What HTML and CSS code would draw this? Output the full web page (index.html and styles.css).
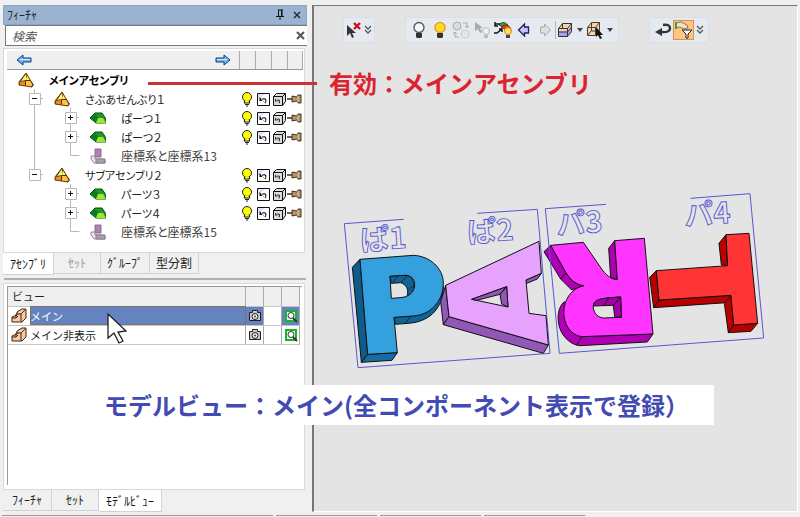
FILE: index.html
```html
<!DOCTYPE html>
<html lang="ja">
<head>
<meta charset="utf-8">
<title>モデルビュー</title>
<link rel="stylesheet" href="styles.css">
</head>
<body>
<svg class="defs" aria-hidden="true">
  <symbol id="assembly" viewBox="0 0 16 16"><path d="M8 1 1 10v3l13 2 2-2z" fill="#553300"/><path d="M8 2v6l-5 1z" fill="#f7f39a"/><path d="M9 2l4 6H8z" fill="#fff36a"/><path d="M1 10l6-1v5l-5-1z" fill="#f08a1c"/><path d="M8 9h5l2 5H8z" fill="#ffc04a"/><path d="M8 1 1 10v3l13 2 1-2z" fill="none" stroke="#6b4300"/></symbol>
  <symbol id="part" viewBox="0 0 16 16"><path d="M0 8l5-5h7l4 6v4H6z" fill="#1f9a28" stroke="#064d0c"/><path d="M6 13l2-5h5l3 5z" fill="#9be82e"/><path d="M1 8l4-4 3 3-2 5z" fill="#0c7a20"/></symbol>
  <symbol id="coord" viewBox="0 0 16 16"><path d="M5 1h6v8H5z" fill="#ab84ad" stroke="#8d6d90"/><path d="M1 8h4v3h7l3 1v3H4l-3-4z" fill="#eee3ef" stroke="#93809a"/><path d="M6 11h9v4H6z" fill="#a9a0ac" stroke="#877d8a"/></symbol>
  <symbol id="lamp" viewBox="0 0 16 16"><circle cx="8" cy="6" r="4.500" fill="#ff0" stroke="#222"/><path d="M6 10h4v2H6z" fill="#ff0"/><path d="M5.500 10v2h5v-2M6 13.500h4M7 15h2" fill="none" stroke="#222" stroke-width="1.200"/></symbol>
  <symbol id="undo" viewBox="0 0 16 16"><path d="M2.500 2.500h12v12h-12z" fill="#fff" stroke="#111"/><path d="M3 3h7L3 9z" fill="#eadcff"/><path d="M4.500 6v4h4zM6 8.500c4-3 7-.5 4.500 4" fill="#111" /><path d="M7 9c3-2 4 0 3 3" fill="#fff"/></symbol>
  <symbol id="cube" viewBox="0 0 16 16"><path d="M2.500 5.500l3-3h9v8l-3 4h-9z" fill="#ddd" stroke="#111"/><path d="M2.500 5.500h9v9M11.500 5.500l3-3" fill="none" stroke="#111"/><path d="M4 7.500v3h3zM5 9.500c3-2 5-.5 3.500 3" fill="#222"/><path d="M6 10c2-1 2 0 2 2" fill="#ddd"/></symbol>
  <symbol id="pin" viewBox="0 0 16 16"><path d="M0 8h6" stroke="#333" stroke-width="1.500"/><path d="M5 5v6l5-1 1 2h3V4h-3l-1 2z" fill="#b4936a" stroke="#4a3520"/><path d="M11 5v6" stroke="#e4cba4"/></symbol>
  <symbol id="toggle-plus" viewBox="0 0 36 19"><path d="M16.500 0v19M16 9.500h9" stroke="#b8b8b8"/><path d="M11.500 4.500h11v11h-11z" fill="#fff" stroke="#b8b8b8"/><path d="M14 9.500h5M16.500 7v5" stroke="#111"/></symbol>
  <symbol id="toggle-minus" viewBox="0 0 36 19"><path d="M16.500 0v19M16 9.500h9" stroke="#b8b8b8"/><path d="M11.500 4.500h11v11h-11z" fill="#fff" stroke="#b8b8b8"/><path d="M14 9.500h5" stroke="#111"/></symbol>
  <symbol id="toggle-last" viewBox="0 0 36 19"><path d="M16.500 0v9M16 9.500h9" stroke="#b8b8b8"/><path d="M11.500 4.500h11v11h-11z" fill="#fff" stroke="#b8b8b8"/><path d="M14 9.500h5" stroke="#111"/></symbol>
  <symbol id="line" viewBox="0 0 36 19"><path d="M16.500 0v19" stroke="#b8b8b8"/></symbol>
  <symbol id="corner" viewBox="0 0 36 19"><path d="M16.500 0v9.500h9" fill="none" stroke="#b8b8b8"/></symbol>
  <symbol id="arrow-l" viewBox="0 0 16 14"><path d="M1 7l6-5v3h8v4H7v3z" fill="#6db7f2" stroke="#123a7a"/><path d="M4 6.500h10" stroke="#d5efff"/></symbol>
  <symbol id="arrow-r" viewBox="0 0 16 14"><path d="M15 7L9 2v3H1v4h8v3z" fill="#6db7f2" stroke="#123a7a"/><path d="M2 6.500h10" stroke="#d5efff"/></symbol>
  <symbol id="step" viewBox="0 0 16 16"><path d="M1 9l5-2V4l5-3h4v9l-4 4H1z" fill="#f8c9a2" stroke="#3a2412"/><path d="M1 10h4V6h5v8M10 6l4-4M5 10l2-2" fill="none" stroke="#3a2412"/></symbol>
  <symbol id="camera" viewBox="0 0 16 16"><path d="M2.500 4.500h3v-2h5v2h3v8h-11z" fill="#ccc" stroke="#222"/><circle cx="8" cy="8.500" r="3" fill="#eee" stroke="#222"/><circle cx="8" cy="8.500" r="1" fill="#444"/></symbol>
  <symbol id="zoomview" viewBox="0 0 16 16"><path d="M3 3h10v10H3z" fill="#e9f6e9" stroke="#18b52c" stroke-width="2"/><circle cx="8" cy="7.500" r="3" fill="#fff" stroke="#333"/><path d="M10 10l4 4" stroke="#333" stroke-width="2"/></symbol>
  <symbol id="chevrons" viewBox="0 0 8 10"><path d="M1 1l3 3 3-3M1 5l3 3 3-3" fill="none" stroke="#555" stroke-width="1.300"/></symbol>
  <symbol id="caret" viewBox="0 0 8 10"><path d="M1 3h6L4 7z" fill="#444"/></symbol>
</svg>

<main class="workspace">
  <aside class="dock">
    <section class="pane pane-top">
      <header class="titlebar">
        <h1>ﾌｨｰﾁｬ</h1>
        <button class="bare" aria-label="固定"><svg width="12" height="12" viewBox="0 0 12 12"><path d="M4 1h5M4.500 1v6M7.500 1v6M8 1v6M2 7.500h8M6 8v3" stroke="#111" fill="none"/></svg></button>
        <button class="bare" aria-label="閉じる"><svg width="12" height="12" viewBox="0 0 12 12"><path d="M3 3l6 6M9 3l-6 6" stroke="#222" stroke-width="1.300"/></svg></button>
      </header>
      <div class="search">
        <input type="text" placeholder="検索" aria-label="検索">
        <button class="bare" aria-label="クリア"><svg width="12" height="12" viewBox="0 0 12 12"><path d="M2 2l7 7M9 2l-7 7" stroke="#555" stroke-width="2"/></svg></button>
      </div>
      <div class="box tree-box">
        <div class="tree-head">
          <button class="bare" aria-label="戻る"><svg width="16" height="14"><use href="#arrow-l"/></svg></button>
          <button class="bare next" aria-label="進む"><svg width="16" height="14"><use href="#arrow-r"/></svg></button>
          <span></span><span></span><span></span><span></span>
        </div>
        <ul class="tree">
          <li><svg class="node"><use href="#assembly"/></svg><b>メインアセンブリ</b></li>
          <li><button class="bare" aria-label="折りたたむ"><svg class="guide"><use href="#toggle-minus"/></svg></button><svg class="node"><use href="#assembly"/></svg>さぶあせんぶり１<span class="marks"><svg><use href="#lamp"/></svg><svg><use href="#undo"/></svg><svg><use href="#cube"/></svg><svg><use href="#pin"/></svg></span></li>
          <li><svg class="guide"><use href="#line"/></svg><button class="bare" aria-label="展開"><svg class="guide"><use href="#toggle-plus"/></svg></button><svg class="node"><use href="#part"/></svg>ぱーつ１<span class="marks"><svg><use href="#lamp"/></svg><svg><use href="#undo"/></svg><svg><use href="#cube"/></svg><svg><use href="#pin"/></svg></span></li>
          <li><svg class="guide"><use href="#line"/></svg><button class="bare" aria-label="展開"><svg class="guide"><use href="#toggle-plus"/></svg></button><svg class="node"><use href="#part"/></svg>ぱーつ２<span class="marks"><svg><use href="#lamp"/></svg><svg><use href="#undo"/></svg><svg><use href="#cube"/></svg><svg><use href="#pin"/></svg></span></li>
          <li class="system"><svg class="guide"><use href="#line"/></svg><svg class="guide"><use href="#corner"/></svg><svg class="node"><use href="#coord"/></svg>座標系と座標系13</li>
          <li><button class="bare" aria-label="折りたたむ"><svg class="guide"><use href="#toggle-last"/></svg></button><svg class="node"><use href="#assembly"/></svg>サブアセンブリ２<span class="marks"><svg><use href="#lamp"/></svg><svg><use href="#undo"/></svg><svg><use href="#cube"/></svg><svg><use href="#pin"/></svg></span></li>
          <li><svg class="guide"></svg><button class="bare" aria-label="展開"><svg class="guide"><use href="#toggle-plus"/></svg></button><svg class="node"><use href="#part"/></svg>パーツ３<span class="marks"><svg><use href="#lamp"/></svg><svg><use href="#undo"/></svg><svg><use href="#cube"/></svg><svg><use href="#pin"/></svg></span></li>
          <li><svg class="guide"></svg><button class="bare" aria-label="展開"><svg class="guide"><use href="#toggle-plus"/></svg></button><svg class="node"><use href="#part"/></svg>パーツ４<span class="marks"><svg><use href="#lamp"/></svg><svg><use href="#undo"/></svg><svg><use href="#cube"/></svg><svg><use href="#pin"/></svg></span></li>
          <li class="system"><svg class="guide"></svg><svg class="guide"><use href="#corner"/></svg><svg class="node"><use href="#coord"/></svg>座標系と座標系15</li>
        </ul>
      </div>
      <nav class="tabs">
        <button class="active">ｱｾﾝﾌﾞﾘ</button><button class="muted">ｾｯﾄ</button><button>ｸﾞﾙｰﾌﾟ</button><button>型分割</button>
      </nav>
    </section>
    <div class="splitter"></div>
    <section class="pane pane-bottom">
      <div class="box view-box">
        <div class="view-list">
          <table>
            <colgroup><col class="c-icon"><col><col class="c-mark"><col class="c-mark"><col class="c-mark"></colgroup>
            <thead><tr><th colspan="2">ビュー</th><th></th><th></th><th></th></tr></thead>
            <tbody>
              <tr class="selected"><td><svg><use href="#step"/></svg></td><td class="name">メイン</td><td class="hit"><svg><use href="#camera"/></svg></td><td></td><td class="hit"><svg><use href="#zoomview"/></svg></td></tr>
              <tr><td><svg><use href="#step"/></svg></td><td class="name">メイン非表示</td><td><svg><use href="#camera"/></svg></td><td></td><td><svg><use href="#zoomview"/></svg></td></tr>
            </tbody>
          </table>
        </div>
      </div>
      <nav class="tabs tabs-bottom">
        <button>ﾌｨｰﾁｬ</button><button>ｾｯﾄ</button><button class="active">ﾓﾃﾞﾙﾋﾞｭｰ</button>
      </nav>
    </section>
  </aside>

  <section class="canvas">
    <div class="toolbars">
      <div class="toolbar compact">
        <button aria-label="選択解除"><svg width="18" height="18" viewBox="0 0 18 18"><path d="M2 4v11l3-3 2 5 2-1-2-4h4z" fill="#333"/><path d="M9 2l6 6M15 2l-6 6" stroke="#c4141c" stroke-width="2.400"/></svg></button>
        <button class="slim" aria-label="その他"><svg width="8" height="10"><use href="#chevrons"/></svg></button>
      </div>
      <div class="toolbar">
        <button aria-label="非表示"><svg width="18" height="18" viewBox="0 0 18 18"><circle cx="9" cy="6.500" r="5" fill="#f4f6f7" stroke="#555" stroke-width="1.300"/><path d="M6 12h6v4l-1 1H7l-1-1z" fill="#333"/></svg></button>
        <button aria-label="表示"><svg width="18" height="18" viewBox="0 0 18 18"><circle cx="9" cy="6.500" r="5" fill="#ffdf2a" stroke="#f09a1c" stroke-width="1.500"/><path d="M6 12h6v4l-1 1H7l-1-1z" fill="#333"/></svg></button>
        <button aria-label="表示切替"><svg width="18" height="18" viewBox="0 0 18 18"><circle cx="5" cy="5" r="4" fill="#ddd" stroke="#aaa"/><circle cx="13" cy="13" r="4" fill="#e6e6e6" stroke="#ccc"/><path d="M11 2h4v4M13 5l2 2 2-2M7 16H3v-4M1 13l2-2 2 2" fill="none" stroke="#aaa"/></svg></button>
        <button aria-label="選択表示"><svg width="18" height="18" viewBox="0 0 18 18"><path d="M2 1v9l3-2 2 4 2-1-2-4h3z" fill="#aaa"/><circle cx="13" cy="10" r="3.500" fill="#eee" stroke="#bbb"/><path d="M11 14h4v3h-4z" fill="#bbb"/></svg></button>
        <button aria-label="色表示"><svg width="20" height="18" viewBox="0 0 20 18"><path d="M6 4q4-5 9 0l-2 3z" fill="#37a34a" stroke="#1b5724"/><path d="M8 6q6-5 10 2l-4 1z" fill="#e2481e" stroke="#7b1c10"/><circle cx="15" cy="10" r="3.500" fill="#ffe45a" stroke="#e97818"/><path d="M13 14h4v3h-4z" fill="#444"/><path d="M2 1v4h3M2 3h5M1 12h3l5-4M6 8h3v3" fill="none" stroke="#111" stroke-width="1.400"/></svg></button>
        <button aria-label="前へ"><svg width="14" height="16" viewBox="0 0 14 16"><path d="M1.500 8l6-6v3h4v6h-4v3z" fill="#c9c2ff" stroke="#221e5c" stroke-width="1.300"/></svg></button>
        <button aria-label="次へ"><svg width="14" height="16" viewBox="0 0 14 16"><path d="M12.500 8l-6-6v3h-4v6h4v3z" fill="#e0e0e0" stroke="#aaa"/></svg></button>
        <span class="sep"></span>
        <button class="mid" aria-label="表示方向"><svg width="16" height="16" viewBox="0 0 16 16"><path d="M1.500 6.500l4-5h9v8l-4 5h-9z" fill="#f1d3b4"/><path d="M1.500 9.500h9l4-4v5l-4 4h-9z" fill="#a9a2f0"/><path d="M1.500 6.500l4-5h9v8l-4 5h-9zM1.500 6.500h9v8M10.500 6.500l4-5M1.500 10h9l4-5M5.500 2v4" fill="none" stroke="#333"/></svg></button>
        <button class="slim" aria-label="表示方向メニュー"><svg width="8" height="10"><use href="#caret"/></svg></button>
        <button class="mid" aria-label="選択方法"><svg width="18" height="18" viewBox="0 0 18 18"><path d="M1.500 6.500l4-5h8v8l-4 5h-8z" fill="#f1d3b4" stroke="#4d3c2c"/><path d="M1.500 6.500h8v8M9.500 6.500l4-5M5.500 2v8h8M5 10l-3 4" fill="none" stroke="#4d3c2c"/><path d="M10 6v10l2-2 2 4 2-1-2-3h3z" fill="#111"/></svg></button>
        <button class="slim" aria-label="選択方法メニュー"><svg width="8" height="10"><use href="#caret"/></svg></button>
      </div>
      <div class="toolbar">
        <button aria-label="元に戻す"><svg width="18" height="16" viewBox="0 0 18 16"><path d="M9 3q7-1 7 3 0 5-9 4" fill="none" stroke="#333" stroke-width="2.400"/><path d="M1 10l7-4v8z" fill="#333"/></svg></button>
        <button class="on" aria-label="フィルター"><svg width="18" height="18" viewBox="0 0 18 18"><path d="M1 2l5-1 6 3 1 3-4 1-4-2-4 1z" fill="#f3e2c4" stroke="#86765c"/><path d="M1 1v7" stroke="#3f9b4b" stroke-width="2"/><path d="M7 9h10l-4 4v4h-2v-4z" fill="#fff" stroke="#222"/></svg></button>
        <button class="slim" aria-label="その他"><svg width="8" height="10"><use href="#chevrons"/></svg></button>
      </div>
    </div>

    <svg class="model" viewBox="340 190 430 180" role="img" aria-label="PARTモデル">
      <g transform="translate(330 180) scale(.33333)" stroke="#111" stroke-width="3" stroke-linejoin="round">
        <path d="M221 118L43 131l41 432 576-43L622 88l-180 12" fill="none" stroke="#5656d2"/>
        <path d="M67 262l23-24 23 285-19 24z" fill="#0e5c8e"/>
        <path d="M94 547l19-24 89-5-16 23z" fill="#146ca4"/>
        <path d="M192 412l5 21 38-3C290 426 338 395 340 320L250 400z" fill="#0f6499"/>
        <path fill-rule="evenodd" d="M90 238l160-12C300 228 340 265 340 310 340 365 300 405 250 408l-58 4 10 106-89 5zM180 289l48-3C270 290 260 352 210 353l-26 2z" fill="#35a0de"/>
        <path d="M180 289l48-3C260 290 258 340 232 346 236 328 230 315 212 308l-28 2z" fill="#0f6499"/>
        <path d="M188 308l16-20M212 308l20-21M235 330l20-16M225 430l18-22" fill="none" stroke-width="2"/>
        <path d="M347 316l10 94-17 24-8-69z" fill="#9258b8"/>
        <path d="M357 410l298 85-15 25-300-86z" fill="#9258b8"/>
        <path d="M588 300l46-20-12 17-32 13z" fill="#9258b8"/>
        <path fill-rule="evenodd" d="M347 316l280-132 7 96-46 20 9 100 51 7 7 88-298-85zM425 358l105-38 4 61z" fill="#e6a2fd"/>
        <path d="M425 358l105-38-20 23-70 18zM530 320l4 61-19-9-5-29z" fill="#9258b8"/>
      </g>
      <g transform="translate(530 180) scale(.33333)" stroke="#111" stroke-width="3" stroke-linejoin="round">
        <path d="M42 215l20-19 46 82C125 306 145 315 162 317l-37 13-33-33z" fill="#b000b4"/>
        <path d="M92 297l16-19" fill="none"/>
        <path d="M103 365C85 380 80 410 88 440 97 475 130 497 150 497l202-11 17-24-214 8z" fill="#b000b4"/>
        <path d="M254 182l-18 23 6 87 20 7z" fill="#b000b4"/>
        <path fill-rule="evenodd" d="M62 196l98-9 57 83C235 292 250 300 262 299l-8-117 89-7 26 287-214 8C85 460 80 335 162 317 145 315 125 306 108 278zM190 375C195 357 210 355 272 351l2 61-54 2C200 412 188 395 190 375z" fill="#ff35ff"/>
        <path d="M190 378C195 357 210 355 272 351l2 61-20-2-4-34z" fill="#a600aa"/>
        <path d="M250 376l22-25M222 376l15-22M155 470l-15 25" fill="none"/>
        <path d="M228 73L46 86l42 434 613-46L660 41 481 55" fill="none" stroke="#5656d2"/>
        <path d="M379 272l8 88-16 23-12-91z" fill="#b80000"/>
        <path d="M387 360l216-14-13 22-219 15z" fill="#b80000"/>
        <path d="M603 346l8 89-16 23-12-88z" fill="#b80000"/>
        <path d="M611 435l72-5-20 24-68 4z" fill="#b80000"/>
        <path d="M588 164l5 93-19-2-7-65z" fill="#b80000"/>
        <path d="M588 164l69-4 26 270-72 5-8-89-216 14-8-88 214-15z" fill="#ff3535"/>
      </g>
      <g class="labels">
        <text transform="translate(361 251) rotate(-4)">ぱ1</text>
        <text transform="translate(468 243) rotate(-4)">ぱ2</text>
        <text transform="translate(557 235) rotate(-4)">パ3</text>
        <text transform="translate(685 226) rotate(-4)">パ4</text>
      </g>
    </svg>
  </section>
</main>
<footer class="status"><span class="wide"></span><span></span><span></span><span></span></footer>

<div class="note note-red"><i></i>有効：メインアセンブリ</div>
<div class="note note-blue">モデルビュー：メイン(全コンポーネント表示で登録）</div>
<svg class="pointer" viewBox="0 0 20 32"><path d="M1 1v24l6-5 5 10 4-2-5-9 8-1z" fill="#fff" stroke="#222" stroke-width="1.300"/></svg>
</body>
</html>
```
FILE: styles.css
```css
* { box-sizing: border-box; }

body {
  margin: 0;
  min-height: 100vh;
  display: flex;
  flex-direction: column;
  position: relative;
  background: #f0f0f0;
  color: #222;
  font: 12px/18px "Noto Sans CJK JP", "Noto Sans", sans-serif;
}

svg { display: block; flex: none; }
button, input { font: inherit; color: inherit; }
.defs { position: absolute; width: 0; height: 0; }

.bare {
  display: block;
  border: 0;
  padding: 0;
  background: none;
}

.workspace {
  flex: 1;
  display: flex;
  gap: 5px;
  padding: 5px 2px 0 3px;
}

/* Docked panels */
.dock {
  flex: 0 0 304px;
  display: flex;
  flex-direction: column;
}

.pane { display: flex; flex-direction: column; }
.pane-bottom { flex: 1; }

.titlebar {
  display: flex;
  align-items: center;
  gap: 5px;
  height: 20px;
  padding: 0 3px;
  border: 1px solid #8ea5c2;
  background: #9ab3d1;
}

.titlebar h1 {
  flex: 1;
  margin: 0;
  font-size: 12px;
  font-weight: 400;
}

.search {
  display: flex;
  align-items: center;
  height: 21px;
  margin-left: 2px;
  border: 1px solid #777;
  border-right: 0;
  background: #fff;
}

.search input {
  flex: 1;
  min-width: 0;
  border: 0;
  padding: 0 6px;
  outline: 0;
  background: none;
  font-style: italic;
}

.search input::placeholder { color: #555; opacity: 1; }

.box {
  margin-right: 2px;
  border: 1px solid #d9d9d9;
  background: #fff;
}

.tree-box { margin-top: 2px; padding: 2px 1px 11px 3px; }

.tree-head {
  display: flex;
  align-items: center;
  height: 19px;
  padding-left: 9px;
  border-bottom: 1px solid #999;
  background: #efefef;
}

.tree-head .next { margin-left: auto; margin-right: 8px; }
.tree-head span { width: 16px; height: 100%; border-left: 1px solid #aaa; }
.tree-head span:last-child { border-right: 1px solid #aaa; }

.tree { margin: 0; padding: 0; list-style: none; }

.tree li {
  display: flex;
  align-items: center;
  height: 19px;
  padding-left: 11px;
  font-size: 11px;
  font-feature-settings: "palt";
}

.tree .system { font-size: 12px; color: #444; }
.tree b { color: #000; }
.guide { width: 36px; height: 19px; }
.node { width: 16px; height: 16px; margin-right: 15px; }
.marks { display: flex; margin-left: auto; }
.marks svg { width: 16px; height: 16px; }

.tabs { display: flex; align-items: flex-start; height: 22px; }

.tabs button {
  height: 21px;
  padding: 0 6px;
  border: 1px solid #d2d2d2;
  border-width: 0 1px 1px 0;
  background: #f0f0f0;
}

.tabs .active { height: 22px; padding: 0 7px; background: #fff; color: #111; }
.tabs .muted { color: #999; }
.tabs button:nth-child(2) { padding: 0 14px; }
.tabs-bottom button:first-child { padding: 0 9px; }

.splitter { height: 2px; margin: 3px 1px 3px; background: #b0b0b0; }

/* View list */
.view-box { flex: 1; padding: 2px 2px 4px 3px; }

.view-list {
  height: 100%;
  padding-right: 2px;
  border: 1px solid #999;
  border-width: 1px 0 0 1px;
}

table { width: 100%; table-layout: fixed; border-collapse: collapse; }
.c-icon { width: 22px; }
.c-mark { width: 18px; }

th, td {
  height: 19px;
  padding: 0;
  border-right: 1px solid #aaa;
  border-bottom: 1px solid #c4c4c4;
  font-weight: 400;
  font-size: 11px;
  line-height: 16px;
  text-align: left;
}

th { padding-left: 4px; background: #efefef; }
td:first-child { border-right: 0; }
td svg { width: 16px; height: 16px; margin: 0 auto; }
.selected .name { background: #6483c0; color: #fff; outline: 1px solid #7d7468; outline-offset: -1px; }
.selected .hit { background: #6483c0; }

/* Model canvas */
.canvas {
  flex: 1;
  position: relative;
  border: 1px solid #fff;
  border-top: 1px solid #777;
  border-left: 2px solid #777;
  background: #e4e4e4;
}

.toolbars { display: flex; gap: 30px; padding: 11px 0 0 29px; }

.toolbar {
  display: flex;
  align-items: center;
  height: 26px;
  padding: 0 2px;
  border: 1px solid #dadfe4;
  border-radius: 2px;
  background: #e4eaf0;
}

.toolbar button {
  display: flex;
  align-items: center;
  justify-content: center;
  width: 21px;
  height: 20px;
  padding: 0;
  border: 0;
  background: none;
}

.toolbar .mid { width: 18px; }
.toolbar .slim { width: 12px; }
.toolbar .on { border: 1px solid #d9904e; background: #ffc582; }
.compact { padding: 0 1px; }
.compact button { width: 18px; }
.compact .slim { width: 10px; }
.sep { width: 1px; height: 18px; background: #b4b8bc; }

.model { position: absolute; left: 26px; top: 184px; width: 430px; height: 180px; }
.labels text {
  font-size: 29px;
  font-weight: 700;
  fill: #e4e4e4;
  stroke: #5656d2;
  stroke-width: 0.9px;
}

.status { display: flex; gap: 3px; height: 5px; padding: 3px 2px 0; }
.status span { width: 101px; border-top: 1px solid #999; }
.status .wide { width: 271px; }

/* Callouts over the window */
.note {
  position: absolute;
  display: flex;
  align-items: center;
  font-size: 24px;
  line-height: 36px;
  font-weight: 700;
  white-space: nowrap;
}

.note-red { left: 148px; top: 65px; gap: 12px; color: #dc2430; }
.note-red i { width: 169px; height: 3px; background: #cc3034; }

.note-blue {
  left: 98px;
  top: 385px;
  height: 40px;
  padding: 0 25px 0 6px;
  background: #fff;
  color: #414bb2;
}

.pointer { position: absolute; left: 107px; top: 313px; width: 20px; height: 32px; }
```
